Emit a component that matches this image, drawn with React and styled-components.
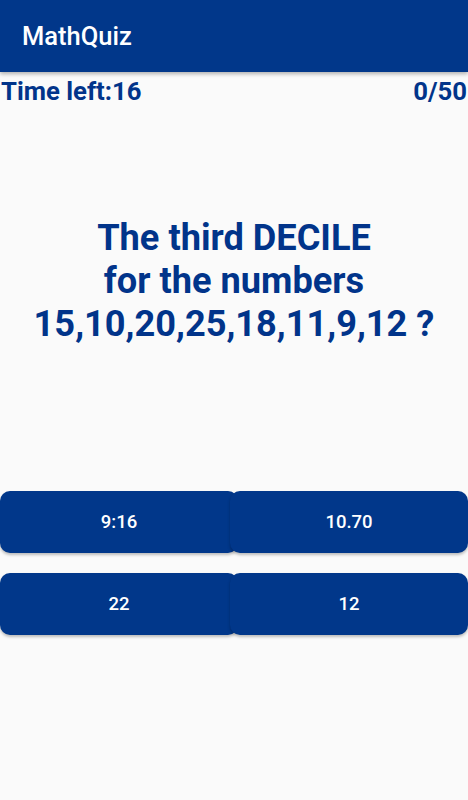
import React from "react";
import styled, { createGlobalStyle } from "styled-components";

const GlobalStyle = createGlobalStyle`
  html, body {
    margin: 0;
    padding: 0;
    background: #fafafa;
    font-family: Roboto, "Noto Sans", sans-serif;
  }
`;

const answers = ["9:16", "10.70", "22", "12"];

const App = () => {
  return (
    <Screen>
      <GlobalStyle />
      <AppBar>
        <Title>MathQuiz</Title>
      </AppBar>
      <StatusRow>
        <Status>Time left:16</Status>
        <Status>0/50</Status>
      </StatusRow>
      <Question>
        The third DECILE
        <br />
        for the numbers
        <br />
        15,10,20,25,18,11,9,12 ?
      </Question>
      <Answers>
        {answers.map((a, i) => (
          <AnswerButton key={a} side={i % 2 === 0 ? "left" : "right"}>
            {a}
          </AnswerButton>
        ))}
      </Answers>
    </Screen>
  );
};

export default App;

const Screen = styled.div`
  min-height: 800px;
  display: flex;
  flex-direction: column;
  background: #fafafa;
`;

const AppBar = styled.header`
  height: 72px;
  background-color: #01378a;
  display: flex;
  align-items: center;
  padding-left: 22px;
  box-shadow: 0 2px 4px rgba(0, 0, 0, 0.3);
  position: relative;
  z-index: 1;
`;

const Title = styled.h1`
  margin: 0;
  color: #fff;
  font-size: 25.5px;
  font-weight: 500;
  padding-bottom: 1px;
`;

const StatusRow = styled.div`
  display: flex;
  justify-content: space-between;
  padding: 5px 1px 0 1px;
`;

const Status = styled.span`
  color: #01348a;
  font-size: 25.7px;
  font-weight: 700;
  line-height: 29px;
`;

const Question = styled.h2`
  margin: 110px 0 0;
  text-align: center;
  color: #01348a;
  font-size: 36.2px;
  font-weight: 700;
  line-height: 43px;
`;

const Answers = styled.div`
  margin-top: 146px;
  display: grid;
  grid-template-columns: 1fr 1fr;
  row-gap: 20px;
`;

const AnswerButton = styled.button`
  height: 62px;
  border: 0;
  border-radius: 10px;
  background-color: #01378a;
  color: #fff;
  font-family: Roboto, "Noto Sans", sans-serif;
  font-size: 18.5px;
  font-weight: 500;
  box-shadow: 0 2px 3px rgba(0, 0, 0, 0.25);
  cursor: pointer;
  margin: ${(p) => (p.side === "left" ? "0 -4px 0 0" : "0 0 0 -4px")};
  padding: 0;
`;
